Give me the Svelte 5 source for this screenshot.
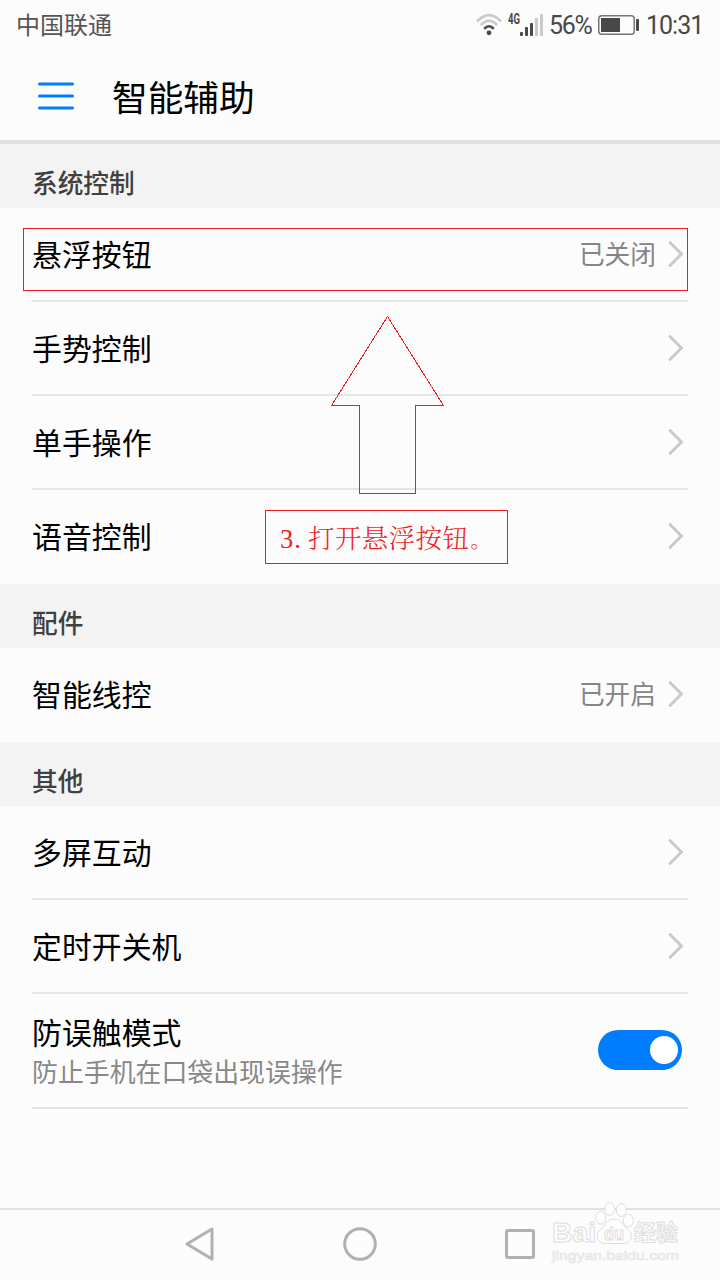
<script lang="ts">
  interface Item {
    label: string;
    value?: string;
    hint?: string;
    toggle?: boolean;
  }

  interface Section {
    title: string;
    items: Item[];
  }

  const sections: Section[] = [
    {
      title: '系统控制',
      items: [
        { label: '悬浮按钮', value: '已关闭' },
        { label: '手势控制' },
        { label: '单手操作' },
        { label: '语音控制' }
      ]
    },
    {
      title: '配件',
      items: [{ label: '智能线控', value: '已开启' }]
    },
    {
      title: '其他',
      items: [
        { label: '多屏互动' },
        { label: '定时开关机' },
        { label: '防误触模式', hint: '防止手机在口袋出现误操作', toggle: true }
      ]
    }
  ];

  let enabled = $state(true);
</script>

<div class="screen">
  <div class="status-bar">
    <span class="carrier">中国联通</span>
    <svg class="wifi" width="28" height="24" viewBox="0 0 28 24" fill="none" stroke-width="2.6">
      <path d="M2 8.3Q14 -4 26 8.3" stroke="#c9c9c9" />
      <path d="M5.8 12Q14 3.4 22.2 12" stroke="#c9c9c9" />
      <path d="M9.2 15.8Q14 10.6 18.8 15.8" stroke="#484848" />
      <circle cx="14" cy="19.8" r="2.4" fill="#484848" />
    </svg>
    <svg class="network" width="12" height="20" viewBox="0 0 12 20">
      <text x="0" y="15.5" textLength="12" lengthAdjust="spacingAndGlyphs">4G</text>
    </svg>
    <svg class="signal" width="24" height="24" viewBox="0 0 24 24">
      <rect x="0" y="19" width="3" height="4" rx="1" fill="#484848" />
      <rect x="5" y="14" width="3" height="9" rx="1" fill="#484848" />
      <rect x="10" y="10" width="3" height="13" rx="1" fill="#484848" />
      <rect x="15" y="5" width="3" height="18" rx="1" fill="#c9c9c9" />
      <rect x="20" y="1" width="3" height="22" rx="1" fill="#c9c9c9" />
    </svg>
    <span class="percent">56%</span>
    <svg class="battery" width="41" height="20" viewBox="0 0 41 20">
      <rect x="0.75" y="0.75" width="35.5" height="18.5" rx="3" fill="none" stroke="#777" stroke-width="1.5" />
      <rect x="3" y="3" width="19" height="14" fill="#484848" />
      <rect x="38" y="4" width="3" height="12" rx="1" fill="#484848" />
    </svg>
    <span class="clock">10:31</span>
  </div>

  <header class="title-bar">
    <svg class="menu" width="36" height="28" viewBox="0 0 36 28" stroke="#007dff" stroke-width="3" stroke-linecap="round">
      <path d="M1.5 2H34.5M1.5 14H34.5M1.5 26H34.5" />
    </svg>
    <h1>智能辅助</h1>
  </header>

  {#each sections as section}
    <h2>{section.title}</h2>
    <ul>
      {#each section.items as item}
        <li class:tall={item.toggle}>
          <div class="text">
            <span class="label">{item.label}</span>
            {#if item.hint}
              <span class="hint">{item.hint}</span>
            {/if}
          </div>
          {#if item.toggle}
            <button
              class="switch"
              class:on={enabled}
              aria-label={item.label}
              onclick={() => (enabled = !enabled)}
            >
              <span class="knob"></span>
            </button>
          {:else}
            {#if item.value}
              <span class="value">{item.value}</span>
            {/if}
            <svg class="chevron" width="16" height="28" viewBox="0 0 16 28" fill="none" stroke="#c8c8c8" stroke-width="2.8" stroke-linecap="round">
              <path d="M2 2.5L13.5 14L2 25.5" />
            </svg>
          {/if}
        </li>
      {/each}
    </ul>
  {/each}

  <nav>
    <svg width="32" height="36" viewBox="0 0 32 36">
      <path d="M3 18L28 3V33Z" />
    </svg>
    <svg width="36" height="36" viewBox="0 0 36 36">
      <circle cx="18" cy="18" r="15.3" />
    </svg>
    <svg width="32" height="32" viewBox="0 0 32 32">
      <rect x="2.5" y="2.5" width="27" height="27" rx="1.5" />
    </svg>
  </nav>

  <!-- tutorial marks drawn over the list -->
  <div class="mark-box"></div>
  <svg class="mark-arrow" width="114" height="180" viewBox="0 0 114 180">
    <path d="M56.5 0.5L0.5 89.5H28.5V177.5H84.5V89.5H112.5Z" />
  </svg>
  <div class="mark-note"><span class="step">3.</span>打开悬浮按钮<span class="stop">。</span></div>

  <svg class="watermark" width="134" height="68" viewBox="0 0 134 68">
    <g class="outline">
      <text x="1" y="42" font-size="28" font-weight="700" textLength="44" lengthAdjust="spacingAndGlyphs">Bai</text>
      <path d="M63 19C55 19 54 26 50 29C46 32 46 34 46.5 38C47.5 42 51 43.5 55 43.5H72C76 43.5 79 42 80 38C80.5 34 80 32 76 29C72 26 71 19 63 19Z" />
      <ellipse cx="49.7" cy="17.7" rx="5" ry="6.5" />
      <ellipse cx="58.7" cy="9" rx="5" ry="6.5" />
      <ellipse cx="70.3" cy="10" rx="5" ry="6.5" />
      <ellipse cx="77.3" cy="20.7" rx="5" ry="6.5" />
      <text x="53" y="40" font-size="18" font-weight="700" textLength="20" lengthAdjust="spacingAndGlyphs">du</text>
      <text class="cjk" x="83" y="40" font-size="22" font-weight="700" textLength="44">经验</text>
      <text class="url" x="1" y="60" font-size="13.5" textLength="127" lengthAdjust="spacingAndGlyphs">jingyan.baidu.com</text>
    </g>
  </svg>
</div>

<style>
  :global(body) {
    background: #fcfcfc;
  }

  .screen {
    position: relative;
    display: flex;
    flex-direction: column;
    width: 720px;
    height: 1280px;
    overflow: hidden;
    background: #fcfcfc;
    color: #000;
    font-family: Roboto, 'Noto Sans CJK SC', sans-serif;
  }

  .status-bar {
    display: flex;
    align-items: center;
    height: 50px;
    padding: 0 16px;
    box-sizing: border-box;
    color: #484848;
    font-size: 25px;
    line-height: 50px;
  }

  .carrier {
    margin-right: auto;
    padding-bottom: 3px;
    color: #555;
    font-family: 'Noto Sans CJK SC', sans-serif;
    font-size: 24px;
  }

  .wifi {
    margin-right: 5px;
  }

  .network {
    overflow: visible;
    margin-bottom: 14px;
    fill: #484848;
    font-size: 14px;
    font-weight: 700;
  }

  .signal {
    margin-right: 5px;
  }

  .percent {
    width: 43px;
    margin-right: 6px;
    padding-top: 2px;
    letter-spacing: -1.3px;
  }

  .battery {
    margin-right: 7px;
  }

  .clock {
    width: 58px;
    padding-top: 2px;
    letter-spacing: -1px;
  }

  .title-bar {
    display: flex;
    align-items: center;
    gap: 38px;
    height: 94px;
    padding: 2px 38px 0;
    box-sizing: border-box;
    border-bottom: 4px solid #e1e1e1;
  }

  h1 {
    margin: 0;
    padding-top: 5px;
    font-size: 35.7px;
    font-weight: 400;
    line-height: 50px;
  }

  h2 {
    height: 64px;
    margin: 0;
    padding: 8px 32px 0;
    box-sizing: border-box;
    background: #f3f3f3;
    color: #404040;
    font-size: 25.7px;
    font-weight: 500;
    line-height: 64px;
  }

  ul {
    margin: 0;
    padding: 0 32px;
    list-style: none;
  }

  li {
    display: flex;
    align-items: center;
    height: 94px;
    box-sizing: border-box;
    border-bottom: 2px solid #e5e5e5;
  }

  li:last-child:not(.tall) {
    border-bottom-color: transparent;
  }

  .tall {
    height: 115px;
  }

  .text {
    display: flex;
    flex: 1;
    flex-direction: column;
    padding-top: 3px;
  }

  .label {
    font-size: 29.9px;
    line-height: 42px;
  }

  .hint {
    color: #888;
    font-size: 25.9px;
    line-height: 36px;
  }

  .value {
    margin-right: 12px;
    padding-bottom: 3px;
    color: #858585;
    font-size: 25.7px;
  }

  .chevron {
    margin-right: 4px;
  }

  .switch {
    display: flex;
    align-items: center;
    width: 84px;
    height: 40px;
    margin: 0 6px 2px 0;
    padding: 0 4px;
    border: none;
    border-radius: 20px;
    background: #c8c8c8;
  }

  .switch.on {
    justify-content: flex-end;
    background: #007dff;
  }

  .knob {
    width: 28px;
    height: 28px;
    border-radius: 50%;
    background: #fff;
  }

  nav {
    display: grid;
    grid-template-columns: repeat(3, 160px);
    justify-content: center;
    align-items: center;
    justify-items: center;
    height: 72px;
    margin-top: auto;
    padding-bottom: 2px;
    box-sizing: border-box;
    border-top: 2px solid #e1e1e1;
  }

  nav svg {
    fill: none;
    stroke: #b1b1b1;
    stroke-width: 3;
    stroke-linejoin: round;
  }

  .mark-box {
    position: absolute;
    top: 228px;
    left: 23px;
    width: 665px;
    height: 63px;
    box-sizing: border-box;
    border: 1px solid #ed1c24;
  }

  .mark-arrow {
    position: absolute;
    top: 316px;
    left: 331px;
    fill: none;
    stroke: #ed1c24;
    shape-rendering: crispEdges;
  }

  .mark-note {
    position: absolute;
    top: 510px;
    left: 265px;
    width: 243px;
    height: 54px;
    padding-left: 14px;
    box-sizing: border-box;
    border: 1px solid #ed1c24;
    color: #ed1c24;
    font-family: 'Liberation Serif', SimSun, 'Noto Serif CJK SC', 'Noto Sans CJK SC', serif;
    font-size: 26.5px;
    font-weight: 300;
    line-height: 56px;
    letter-spacing: 0.4px;
    white-space: nowrap;
  }

  .step {
    display: inline-block;
    width: 28px;
    letter-spacing: 1px;
  }

  .stop {
    margin-left: 1px;
    font-size: 20px;
    font-weight: 400;
  }

  .watermark {
    position: absolute;
    top: 1200px;
    left: 551px;
    font-family: 'Liberation Sans', sans-serif;
  }

  .outline {
    fill: #fdfdfd;
    stroke: #dedede;
    stroke-width: 1;
  }

  .cjk {
    font-family: 'Noto Sans CJK SC', sans-serif;
  }

  .url {
    stroke: #e4e4e4;
    stroke-width: 0.7;
  }
</style>
